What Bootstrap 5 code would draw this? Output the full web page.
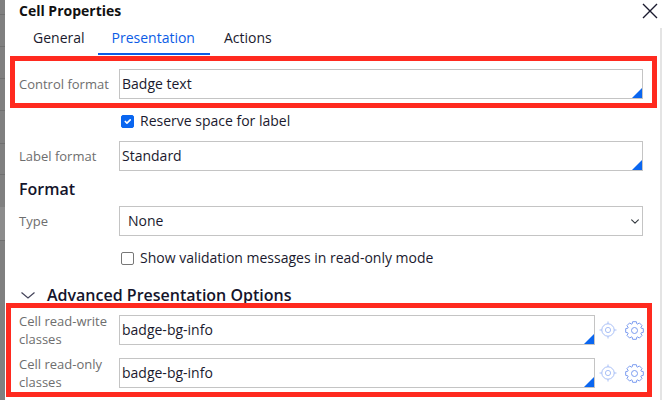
<!DOCTYPE html>
<html lang="en">
<head>
<meta charset="utf-8">
<title>Cell Properties</title>
<link rel="stylesheet" href="https://cdn.jsdelivr.net/npm/bootstrap@5.3.0/dist/css/bootstrap.min.css">
<style>
html, body { height: 400px; overflow: hidden; }
body { background: #fff; font-family: "Open Sans", "Liberation Sans", sans-serif; font-size: 14px; color: #1a1a2e; }
.page-wrap { height: 400px; }
.side-strip { width: 5px; flex: none; background: #808080; background-image: linear-gradient(#808080 14px, #707070 14px, #707070 15px, #808080 15px, #808080 46px, #707070 46px, #707070 47px, #808080 47px, #808080 78px, #707070 78px, #707070 79px, #808080 79px, #808080 110px, #707070 110px, #707070 111px, #808080 111px, #808080 143px, #707070 143px, #707070 144px, #808080 144px, #808080 174px, #707070 174px, #707070 175px, #808080 175px, #808080 207px, #8c8c8c 207px, #8c8c8c 240px, #707070 240px, #707070 241px, #808080 241px); }
.dlg { flex: 1; min-width: 0; position: relative; }
.dlg-edge { position: absolute; right: 0; top: 28px; bottom: 0; width: 2px; background: #e4e4e4; }
.dlg-head { height: 22px; padding-left: 14px; }
.dlg-title { font-size: 14px; font-weight: 700; color: #111; line-height: 22px; margin: 0; }
.dlg-close { width: 16px; height: 16px; margin: 3px 4px 0 0; border: 0; padding: 0; background: none; line-height: 0; }
.tab-row { height: 33px; padding-left: 14px; flex-wrap: nowrap; }
.tab-row .nav-link { padding: 6px 14px 0; height: 33px; font-size: 14px; color: #1a1a2e; line-height: 20px; border-radius: 0; }
.tab-row .nav-link.active { color: #0b5ce6; border-bottom: 2px solid #0b5ce6; margin-left: -1px; padding-right: 15px; }
.red-top { margin: 1px 5px 0 5px; border: 5px solid #ff2a1f; padding: 8px 9px 4px 4px; }
.red-bottom { margin: -2px 10px 0 1px; border: 5px solid #ff2a1f; padding: 7px 0 4px 8px; position: relative; }
.red-bottom .field-row { height: 30px; }
.red-bottom .field-row + .field-row { margin-top: 13px; }
.field-label { width: 100px; flex: none; font-size: 13px; color: #6e6e6e; line-height: 18px; }
.field-box { flex: 1; min-width: 0; position: relative; }
.field-box .form-control, .form-select.plain-select { height: 30px; min-height: 30px; border: 1px solid #c4c4c4; border-radius: 0; padding: 0 2px; font-size: 14px; color: #1a1a2e; line-height: 26px; }
.field-box .form-control { padding-bottom: 2px; }
.form-select.plain-select { padding-left: 8px; background-position: right 1px center; background-size: 12px 9px; }
.corner-mark { position: absolute; right: 1px; bottom: 1px; width: 0; height: 0; border-style: solid; border-width: 0 0 10px 10px; border-color: transparent transparent #0a66f0 transparent; }
.plain-row { margin-left: 14px; margin-right: 14px; }
.check-row { margin: 4px 0 0 116px; height: 18px; font-size: 14px; color: #1a1a2e; line-height: 18px; }
.check-row .form-check-input { width: 13px; height: 13px; margin: 0 6px 0 0; flex: none; border-color: #777; border-radius: 2px; }
.check-row .form-check-input:checked { background-color: #0a66f0; border-color: #0a66f0; }
.check-row label { white-space: nowrap; }
.label-row { margin-top: 11px; padding-right: 19px; }
.fmt-head { font-size: 16px; font-weight: 600; color: #14142b; line-height: 22px; margin: 7px 0 0 14px; }
.type-row { margin-top: 6px; padding-right: 19px; }
.check-row.second { margin-top: 13px; }
.adv-head { margin: 18px 0 0 16px; height: 20px; }
.adv-head h6 { font-size: 16px; font-weight: 600; color: #14142b; line-height: 20px; margin: 0 0 0 12px; }
.tool-icons { width: 52px; flex: none; gap: 8px; padding-left: 4px; }
.tool-icons svg { display: block; }
</style>
</head>
<body>
<div class="page-wrap d-flex">
  <div class="side-strip"></div>
  <div class="dlg">
    <div class="dlg-edge"></div>
    <div class="dlg-head d-flex justify-content-between align-items-start">
      <h5 class="dlg-title">Cell Properties</h5>
      <button class="dlg-close" type="button" aria-label="Close">
        <svg width="16" height="16" viewBox="0 0 16 16"><path d="M1 1l14 14M15 1L1 15" stroke="#1a1a2e" stroke-width="1.4" fill="none"/></svg>
      </button>
    </div>
    <ul class="nav tab-row">
      <li class="nav-item"><a class="nav-link" href="#">General</a></li>
      <li class="nav-item"><a class="nav-link active" href="#">Presentation</a></li>
      <li class="nav-item"><a class="nav-link" href="#">Actions</a></li>
    </ul>

    <div class="red-top">
      <div class="field-row d-flex align-items-center">
        <label class="field-label">Control format</label>
        <div class="field-box"><input class="form-control" type="text" value="Badge text"><span class="corner-mark"></span></div>
      </div>
    </div>

    <div class="check-row d-flex align-items-center">
      <input class="form-check-input" type="checkbox" id="c1" checked>
      <label for="c1">Reserve space for label</label>
    </div>

    <div class="field-row label-row plain-row d-flex align-items-center me-0">
      <label class="field-label">Label format</label>
      <div class="field-box"><input class="form-control" type="text" value="Standard"><span class="corner-mark"></span></div>
    </div>

    <div class="fmt-head">Format</div>

    <div class="field-row type-row plain-row d-flex align-items-center me-0">
      <label class="field-label">Type</label>
      <div class="field-box"><select class="form-select plain-select"><option>None</option></select></div>
    </div>

    <div class="check-row second d-flex align-items-center">
      <input class="form-check-input" type="checkbox" id="c2">
      <label for="c2">Show validation messages in read-only mode</label>
    </div>

    <div class="adv-head d-flex align-items-center">
      <svg width="14" height="7" viewBox="0 0 14 7"><path d="M0.500 0.500l6.500 5.500 6.500-5.500" stroke="#44445a" stroke-width="1.200" fill="none"/></svg>
      <h6>Advanced Presentation Options</h6>
    </div>

    <div class="red-bottom">
      <div class="field-row d-flex align-items-center">
        <label class="field-label">Cell read-write classes</label>
        <div class="field-box"><input class="form-control" type="text" value="badge-bg-info"><span class="corner-mark"></span></div>
        <div class="tool-icons d-flex align-items-center">
          <svg width="18" height="18" viewBox="0 0 18 18" fill="none" stroke="#a9c0f7" stroke-width="1"><circle cx="9" cy="9" r="6.200"/><circle cx="9" cy="9" r="2.600"/><path d="M9 0.500v2.500M9 15v2.500M0.500 9h2.500M15 9h2.500"/></svg>
          <svg width="19" height="19" viewBox="0 0 19 19" fill="none" stroke="#7b9cf0" stroke-width="1" stroke-linejoin="round"><circle cx="9.500" cy="9.500" r="3"/><path d="M7.110 2.920L7.630 .7H11.370L11.890 2.920L12.460 3.160L14.400 1.950L17.050 4.600L15.840 6.540L16.080 7.110L18.300 7.630V11.370L16.080 11.890L15.840 12.460L17.050 14.400L14.400 17.050L12.460 15.840L11.890 16.080L11.370 18.300H7.630L7.110 16.080L6.540 15.840L4.600 17.050L1.950 14.400L3.160 12.460L2.920 11.890L.7 11.370V7.630L2.920 7.110L3.160 6.540L1.950 4.600L4.600 1.950L6.540 3.160Z"/></svg>
        </div>
      </div>
      <div class="field-row d-flex align-items-center">
        <label class="field-label">Cell read-only classes</label>
        <div class="field-box"><input class="form-control" type="text" value="badge-bg-info"><span class="corner-mark"></span></div>
        <div class="tool-icons d-flex align-items-center">
          <svg width="18" height="18" viewBox="0 0 18 18" fill="none" stroke="#a9c0f7" stroke-width="1"><circle cx="9" cy="9" r="6.200"/><circle cx="9" cy="9" r="2.600"/><path d="M9 0.500v2.500M9 15v2.500M0.500 9h2.500M15 9h2.500"/></svg>
          <svg width="19" height="19" viewBox="0 0 19 19" fill="none" stroke="#7b9cf0" stroke-width="1" stroke-linejoin="round"><circle cx="9.500" cy="9.500" r="3"/><path d="M7.110 2.920L7.630 .7H11.370L11.890 2.920L12.460 3.160L14.400 1.950L17.050 4.600L15.840 6.540L16.080 7.110L18.300 7.630V11.370L16.080 11.890L15.840 12.460L17.050 14.400L14.400 17.050L12.460 15.840L11.890 16.080L11.370 18.300H7.630L7.110 16.080L6.540 15.840L4.600 17.050L1.950 14.400L3.160 12.460L2.920 11.890L.7 11.370V7.630L2.920 7.110L3.160 6.540L1.950 4.600L4.600 1.950L6.540 3.160Z"/></svg>
        </div>
      </div>
    </div>
  </div>
</div>
<script src="https://cdn.jsdelivr.net/npm/bootstrap@5.3.0/dist/js/bootstrap.bundle.min.js"></script>
</body>
</html>
